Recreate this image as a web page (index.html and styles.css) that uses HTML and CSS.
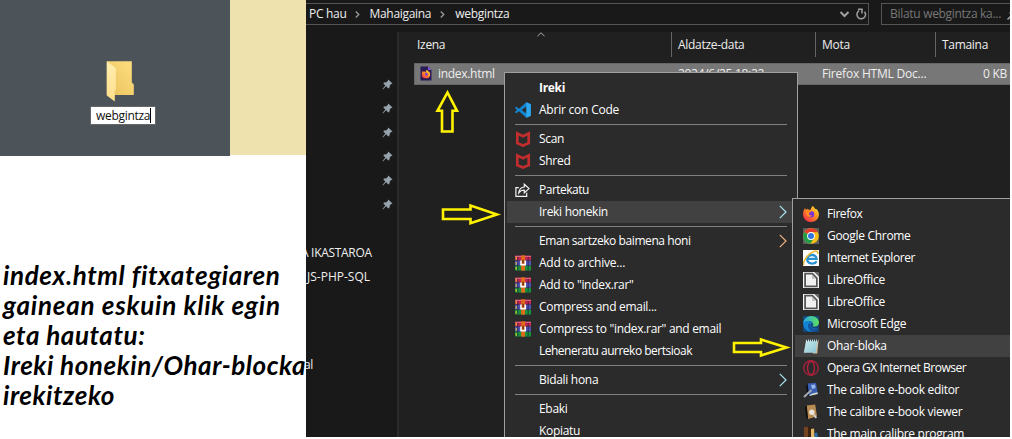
FILE: index.html
```html
<!DOCTYPE html>
<html lang="eu">
<head>
<meta charset="utf-8">
<title>webgintza</title>
<link rel="stylesheet" href="styles.css">
</head>
<body>
<svg class="defs" width="0" height="0" aria-hidden="true">
  <defs>
    <linearGradient id="fold" x1="0" y1="1" x2="1" y2="0"><stop offset="0" stop-color="#e9c15c"/><stop offset="1" stop-color="#ffdf80"/></linearGradient>
    <linearGradient id="flap" x1="0" y1="0" x2="0" y2="1"><stop offset="0" stop-color="#ffedb0"/><stop offset="1" stop-color="#ffdf8a"/></linearGradient>
    <linearGradient id="fox" x1="1" y1="0" x2="0.2" y2="1"><stop offset="0" stop-color="#ffe83a"/><stop offset=".45" stop-color="#ff9a1f"/><stop offset="1" stop-color="#f5274e"/></linearGradient>
    <linearGradient id="edge" x1="0" y1="0" x2="1" y2="0"><stop offset="0" stop-color="#2aa8e8"/><stop offset="1" stop-color="#5fe05a"/></linearGradient>
    <linearGradient id="note" x1="0" y1="0" x2="1" y2="1"><stop offset="0" stop-color="#e6f7fa"/><stop offset="1" stop-color="#86c3d2"/></linearGradient>
    <symbol id="pin" viewBox="0 0 11 11"><path d="M6.3 0.4 10.5 4.6 9.2 5.1 7.7 6.6 7.4 9 6.4 9.6 4.1 7.3 0.8 10.4 0.4 10 3.4 6.6 1.3 4.5 2 3.5 4.4 3.2 5.9 1.7Z" fill="#96a3ac"/></symbol>
    <symbol id="code" viewBox="0 0 16 16"><path d="M11.4 0.2 15.8 2.2V13.8L11.4 15.8 4 9.2 1.3 11.2 0.1 10.4V9.8L2.2 8 0.1 6.2V5.4L1.3 4.8 4 6.8ZM11.5 4.5 6.6 8 11.5 11.6Z" fill="#1485cf" fill-rule="evenodd"/><path d="M11.4 0.2 15.8 2.2V13.8L11.4 15.8Z" fill="#2fa8f2"/></symbol>
    <symbol id="shield" viewBox="0 0 16 16"><path d="M2.3 2.4 8 5.2 13.7 2.4V12.2L8 14.6 2.3 12.2Z" fill="none" stroke="#c22d2d" stroke-width="2.7"/></symbol>
    <symbol id="share" viewBox="0 0 16 16"><path d="M3.8 5.7H.9V14.3H11.7V10.8M9.3 2.2 14 6.6 9.3 10.8V8.2C6.8 8 5.2 8.9 3.8 10.8 4.2 7.3 6 5.2 9.3 5Z" fill="none" stroke="#f4f4f4" stroke-width="1.2"/></symbol>
    <symbol id="rar" viewBox="0 0 16 16"><path d="M0 .8H16V5.4H0Z" fill="#c3244f"/><path d="M0 5.7H16V10.5H0Z" fill="#4f53b5"/><path d="M0 10.8H16V15.5H0Z" fill="#19933b"/><path d="M0 .8H16V1.8H0Z" fill="#ec6f83"/><path d="M6.2.3H10V15.7H6.2Z" fill="#e06b1b"/><path d="M5.2 5.5H6.7V8.7H9.5V5.5H11V10.4H5.2Z" fill="#fff"/><path d="M7.5 4.7H8.7V8.6H7.5Z" fill="#5b2413"/><path d="M1.2 2V4.8M1.2 7V9.8M1.2 12V14.8" stroke="#efd32d" stroke-width="1"/><path d="M2.8 2V15M13.2 2V15" stroke="#1c1d49" stroke-width=".7"/></symbol>
    <symbol id="firefox" viewBox="0 0 16 16"><path d="M9.4 0C11 1 11.8 2.2 12.3 3.1L13.5 3C15.4 5 16 6.8 15.9 8.8 15.6 13 12.3 16 8.1 16 3.6 16 .2 12.8.1 8.4 0 6 .8 3.8 2.1 2.1L2.8 4.1 4.7 2.8 6.3 4.3C8.1 4 8.3 1.5 9.4 0Z" fill="url(#fox)"/><circle cx="8" cy="8.3" r="3.2" fill="#7a35d8"/><path d="M2.7 4.2C4 3.3 5.5 3.5 6.4 4.3L8.3 5.6C7.7 6.6 6.3 6.5 5.9 7.6 5.8 9.1 7.5 10 9.4 9.1 7.6 12 3.8 11 3.3 8Z" fill="#ff8a1d"/></symbol>
    <symbol id="chrome" viewBox="0 0 16 16"><path d="M0 0H16V16H0Z" fill="#5c5c5c"/><circle cx="8" cy="8" r="7.8" fill="#f9bf16"/><path d="M8 8 1.2 4.1A7.8 7.8 0 0 1 14.8 4.2H8Z" fill="#e33b2e"/><path d="M8 8 1.2 4.1A7.8 7.8 0 0 0 7.4 15.8L11 9.9Z" fill="#249b4b"/><circle cx="8" cy="8" r="3.9" fill="#fff"/><circle cx="8" cy="8" r="3" fill="#3274e0"/></symbol>
    <symbol id="ie" viewBox="0 0 16 16"><path d="M0 0H16V16H0Z" fill="#fff"/><path d="M13.6 11.3C11.5 14.8 4.2 14.2 4.2 9 4.2 4 13.4 3.4 13.6 8.9H5" fill="none" stroke="#2792d1" stroke-width="2.3"/><path d="M1 15C-1 12.8 4.2 4 10.8 1.5 14 .4 15.4 1.5 14.5 4" fill="none" stroke="#e9ba32" stroke-width="1.5"/></symbol>
    <symbol id="libre" viewBox="0 0 16 16"><path d="M0 0H16V16H0Z" fill="#f5f5f5"/><path d="M1.2.8H9.8L14.7 5.7V15.2H1.2Z" fill="#555"/><path d="M3 2.6H9L13 6.6V13.5H3Z" fill="#f1f1f1"/><path d="M9 2.5V6.7H13Z" fill="#bcbcbc"/><path d="M11.2 0H16V4.8Z" fill="#666"/></symbol>
    <symbol id="msedge" viewBox="0 0 16 16"><path d="M0 0H16V16H0Z" fill="#154a78"/><path d="M.2 7.3C.6 3 4 0 8.2 0 12.6 0 16 3.2 16 6.6 16 10 12.6 11.4 9.7 10.2 11.5 7.6 8.4 4.6 5 5.2 2.9 5.5 1.2 6.2.2 7.3Z" fill="url(#edge)"/><path d="M.2 7.2C2.8 4 7.8 4.6 8.8 7.2 6.5 7.4 6.4 13 14.3 12.5 10 18 .6 16.2.2 7.2Z" fill="#1284d6"/><path d="M6 7.2C4 9 5 14 9 15.8 12.2 15.5 13.5 14 14.6 12.2 9.7 13.7 6.5 11 7.3 7.4Z" fill="#16549f"/></symbol>
    <symbol id="notepad" viewBox="0 0 16 16"><path d="M4 1.8H15.6L14.2 15.6H10Z" fill="#d6c09a"/><path d="M3.2 1.7H14.5L12.8 14.7H.8Z" fill="url(#note)"/><path d="M4.5 .8V3.4M6.5 .8V3.4M8.5 .8V3.4M10.5 .8V3.4M12.5 .8V3.4M14.5 .8V3.4" stroke="#34464c" stroke-width="1"/><path d="M3 5H14M2.5 7H13.7M2.2 9H13.4M1.8 11H13M1.5 13H12.8" stroke="#8fc4d0" stroke-width=".5"/></symbol>
    <symbol id="opera" viewBox="0 0 16 16"><circle cx="8" cy="8" r="7.3" fill="none" stroke="#b5203f" stroke-width="1.2"/><ellipse cx="8" cy="8" rx="3.5" ry="6.6" fill="none" stroke="#b5203f" stroke-width="1.4"/></symbol>
    <symbol id="editor" viewBox="0 0 16 16"><path d="M4.5 1.5 13 .8 14.8 12 6 14Z" fill="#3a5eb2"/><path d="M8 3 12 2.5 12.6 6 9 7Z" fill="#98b6ed"/><path d="M4.5 1.5 3 3.5 4 13 6 14Z" fill="#0d1016"/><path d="M8 12 14.5 10.2 14.8 12 6 14Z" fill="#dbdcc8"/><path d="M1 15 8.5 8" stroke="#a5a9b0" stroke-width="2"/></symbol>
    <symbol id="viewer" viewBox="0 0 16 16"><path d="M3.7 1.5 12.2.6 14 12.5 5 15Z" fill="#b88b50"/><path d="M3.7 1.5 2 3 3 14 5 15Z" fill="#0f0e0c"/><circle cx="8.8" cy="8.3" r="2.7" fill="#e9e5dc"/><path d="M10.5 10.3 13.3 14" stroke="#d7d7d7" stroke-width="1.6"/></symbol>
    <symbol id="calibre" viewBox="0 0 16 16"><path d="M1 1H5V16H1Z" fill="#77431f"/><path d="M5 1H8V16H5Z" fill="#3a220f"/><path d="M8 3 11 2.5 12 16H8Z" fill="#e2b765"/><path d="M11.5 7 14 6.5 16 16H12Z" fill="#2c6db2"/></symbol>
    <symbol id="next" viewBox="0 0 8 14"><path d="M.8.8 7 7 .8 13.2" fill="none" stroke="currentColor" stroke-width="1.2"/></symbol>
    <symbol id="crumb" viewBox="0 0 5 7"><path d="M.8.5 3.8 3.5.8 6.5" fill="none" stroke="#9a9a9a" stroke-width="1.3"/></symbol>
  </defs>
</svg>

<div class="page">
  <section class="notes">
    <div class="desk">
      <div class="wallpaper">
        <svg class="folder" viewBox="0 0 28 41"><path d="M.8.2H25.8V21.5L27.8 23.5V34H.8Z" fill="url(#fold)"/><path d="M.8.2 9.8 7V28.5L8.8 30V40.5L.8 34.5Z" fill="url(#flap)"/></svg>
        <div class="rename"><span>webgintza</span></div>
      </div>
      <div class="sand"></div>
    </div>
    <div class="lesson">
      <p class="l1">index.html fitxategiaren</p>
      <p class="l2">gainean eskuin klik egin</p>
      <p class="l3">eta hautatu:</p>
      <p class="l4">Ireki honekin/Ohar-blocka</p>
      <p class="l5">irekitzeko</p>
    </div>
  </section>

  <section class="explorer">
    <div class="topbar">
      <div class="address">
        <span>PC hau</span><svg class="crumb"><use href="#crumb"/></svg>
        <span>Mahaigaina</span><svg class="crumb"><use href="#crumb"/></svg>
        <span class="here">webgintza</span>
        <svg class="tools" viewBox="0 0 29 14"><path d="M1.5 5 5.5 9 9.5 5" fill="none" stroke="#a0a0a0" stroke-width="2"/><path d="M20.2 3.7A4.3 4.3 0 1 0 25.5 4.7M19 2.2H23V6.4" fill="none" stroke="#a0a0a0" stroke-width="1.5"/></svg>
      </div>
      <div class="search"><span>Bilatu webgintza ka...</span><svg class="lens" viewBox="0 0 12 12"><path d="M.5 11.5 4 8" stroke="#aaa" stroke-width="1.5"/><circle cx="7" cy="5" r="4" fill="none" stroke="#aaa"/></svg></div>
    </div>
    <div class="main">
      <nav class="side">
        <div class="pins">
          <svg><use href="#pin"/></svg><svg><use href="#pin"/></svg><svg><use href="#pin"/></svg><svg><use href="#pin"/></svg><svg><use href="#pin"/></svg><svg><use href="#pin"/></svg>
        </div>
        <div class="tree"><span class="t1">A IKASTAROA</span><span class="t2">JS-PHP-SQL</span><span class="t3">al</span></div>
      </nav>
      <div class="files">
        <div class="heads">
          <span class="name">Izena<svg class="sort" viewBox="0 0 8 5"><path d="M.5 4.2 4 .8 7.5 4.2" fill="none" stroke="#aaa"/></svg></span>
          <span class="date">Aldatze-data</span><span class="kind">Mota</span><span class="size">Tamaina</span>
        </div>
        <div class="row">
          <span class="name"><svg class="doc" viewBox="0 0 12 15"><path d="M.5.5H8L11.5 4V14.5H.5Z" fill="#2a1a55"/><path d="M8 .5 11.5 4H8Z" fill="#8655d9"/><g transform="translate(1.5 3.8) scale(.55)"><use href="#firefox" width="16" height="16"/></g></svg><b>index.html</b></span>
          <span class="date">2024/6/25 18:22</span><span class="kind">Firefox HTML Doc...</span><span class="size">0 KB</span>
        </div>
      </div>
    </div>

    <div class="menu context">
      <div class="item strong"><i></i><span>Ireki</span></div>
      <div class="item"><svg><use href="#code"/></svg><span class="wide">Abrir con Code</span></div>
      <hr>
      <div class="item"><svg><use href="#shield"/></svg><span>Scan</span></div>
      <div class="item"><svg><use href="#shield"/></svg><span>Shred</span></div>
      <hr>
      <div class="item"><svg><use href="#share"/></svg><span class="tight">Partekatu</span></div>
      <div class="item on"><i></i><span>Ireki honekin</span><svg class="next"><use href="#next"/></svg></div>
      <hr>
      <div class="item"><i></i><span class="snug">Eman sartzeko baimena honi</span><svg class="next warm"><use href="#next"/></svg></div>
      <div class="item"><svg><use href="#rar"/></svg><span class="wide">Add to archive...</span></div>
      <div class="item"><svg><use href="#rar"/></svg><span>Add to "index.rar"</span></div>
      <div class="item"><svg><use href="#rar"/></svg><span>Compress and email...</span></div>
      <div class="item"><svg><use href="#rar"/></svg><span>Compress to "index.rar" and email</span></div>
      <div class="item"><i></i><span class="tight">Leheneratu aurreko bertsioak</span></div>
      <hr>
      <div class="item"><i></i><span>Bidali hona</span><svg class="next"><use href="#next"/></svg></div>
      <hr>
      <div class="item"><i></i><span>Ebaki</span></div>
      <div class="item"><i></i><span>Kopiatu</span></div>
    </div>

    <div class="menu openwith">
      <div class="item"><svg><use href="#firefox"/></svg><span class="snug">Firefox</span></div>
      <div class="item"><svg><use href="#chrome"/></svg><span>Google Chrome</span></div>
      <div class="item"><svg><use href="#ie"/></svg><span class="snug">Internet Explorer</span></div>
      <div class="item"><svg><use href="#libre"/></svg><span>LibreOffice</span></div>
      <div class="item"><svg><use href="#libre"/></svg><span>LibreOffice</span></div>
      <div class="item"><svg><use href="#msedge"/></svg><span>Microsoft Edge</span></div>
      <div class="item on"><svg><use href="#notepad"/></svg><span>Ohar-bloka</span></div>
      <div class="item"><svg><use href="#opera"/></svg><span class="tight">Opera GX Internet Browser</span></div>
      <div class="item"><svg><use href="#editor"/></svg><span>The calibre e-book editor</span></div>
      <div class="item"><svg><use href="#viewer"/></svg><span>The calibre e-book viewer</span></div>
      <div class="item"><svg><use href="#calibre"/></svg><span>The main calibre program</span></div>
    </div>

    <svg class="arrows" viewBox="306 0 704 437"><g fill="none" stroke="#fff200" stroke-width="2.6"><path d="M447.5 92.5 457 110.8H452.5V131.5H442V110.8H437.5Z"/><path d="M443 209.5H470.5V205.5L497 214.5 470.5 223.2V219H443Z"/><path d="M734 343H761V339.5L786.5 347.5 761 355.5V352H734Z"/></g></svg>
  </section>
</div>
</body>
</html>
```
FILE: styles.css
```css
* { box-sizing: border-box; }
body { margin: 0; background: #fff; font: 12px/22px "Open Sans", "Noto Sans", sans-serif; letter-spacing: -0.3px; }
svg { display: block; flex: none; }
.defs { position: absolute; }
.page { display: flex; width: 1010px; height: 437px; overflow: hidden; }

.notes { width: 306px; flex: none; background: #fff; }
.desk { display: flex; align-items: flex-start; height: 156px; }
.wallpaper { width: 230px; height: 156px; background: #4c545a; display: flex; flex-direction: column; align-items: flex-start; padding: 61px 0 0 90px; }
.folder { width: 28px; height: 41px; margin-left: 16px; }
.rename { width: 66px; height: 19px; margin-top: 4px; border: 1px solid #666; background: #fff; color: #111; padding-left: 5px; line-height: 18px; }
.rename span { display: inline-block; height: 15px; line-height: 15px; border-right: 1px solid #000; letter-spacing: -.3px; white-space: nowrap; }
.sand { width: 76px; height: 155px; background: #eee2ae; }
.lesson { padding: 104px 0 0 3px; color: #000; font: italic bold 26px/30px Lato, sans-serif; letter-spacing: .55px; white-space: nowrap; }
.lesson p { margin: 0; }
.lesson .l1 { letter-spacing: .62px; }
.lesson .l2 { letter-spacing: .76px; }

.explorer { position: relative; width: 704px; height: 437px; background: #191919; color: #eee; white-space: nowrap; overflow: hidden; display: flex; flex-direction: column; }
.topbar { display: flex; gap: 12px; height: 32px; padding-top: 3px; }
.address { display: flex; flex: none; align-items: center; width: 563px; height: 22px; border: 1px solid #555; border-left: 0; padding-left: 3px; }
.crumb { width: 5px; height: 7px; margin: 0 9px; }
.here { margin-left: 1px; }
.tools { width: 29px; height: 14px; margin-left: auto; }
.search { display: flex; flex: none; gap: 6px; width: 160px; height: 22px; border: 1px solid #555; padding-left: 8px; line-height: 20px; color: #777; }
.lens { width: 12px; height: 12px; margin-top: 4px; }
.main { display: flex; flex: 1; }
.side { display: flex; width: 93px; border-right: 2px solid #2b2b2b; flex-direction: column; }
.pins { display: flex; flex-direction: column; gap: 13px; padding: 47px 0 0 76px; height: 209px; }
.pins svg { width: 11px; height: 11px; }
.tree { display: flex; flex-direction: column; line-height: 24px; }
.t1 { margin-left: -5px; }
.t2 { letter-spacing: 0; margin-left: 1px; }
.t3 { margin: 64px 0 0 -2px; }
.files { flex: 1; background: #202020; padding-left: 15px; }
.heads { display: flex; height: 31px; line-height: 26px; }
.heads span { height: 25px; }
.heads .date, .heads .kind, .heads .size { border-left: 1px solid #636363; }
.heads .name { display: flex; gap: 92px; padding-left: 3px; }
.heads .sort { width: 8px; height: 5px; }
.name { width: 257px; }
.date { width: 144px; padding-left: 6px; }
.kind { width: 120px; padding-left: 6px; }
.size { padding-left: 6px; width: 74px; }
.row { display: flex; height: 22px; border: 1px solid #666; border-width: 1px 0 1px 1px; background: #777; line-height: 20px; }
.row .name { display: flex; width: 256px; gap: 6px; padding-left: 5px; }
.row b { font-weight: 400; }
.row .date { padding-left: 7px; }
.row .kind { padding-left: 7px; letter-spacing: -.2px; }
.row .size { text-align: right; padding: 0 2px 0 0; }
.doc { width: 12px; height: 15px; margin-top: 2px; }

.menu { position: absolute; border: 1px solid #a0a0a0; background: #2b2b2b; padding: 4px 2px; color: #fff; }
.context { left: 198px; top: 72px; width: 294px; height: 380px; }
.openwith { left: 486px; top: 198px; width: 230px; height: 260px; }
.menu hr { height: 1px; margin: 3px 8px; border: 0; background: #808080; }
.item { display: flex; align-items: center; height: 22px; padding-left: 8px; gap: 8px; }
.item > svg, .item > i { width: 16px; height: 16px; flex: none; }
.item.on { background: #414141; }
.strong { font-weight: 700; }
.wide { letter-spacing: -.22px; }
.snug { letter-spacing: -.42px; }
.tight { letter-spacing: -.5px; }
.item > .next { width: 8px; height: 14px; margin: 0 8px 0 auto; color: #a9e4ee; }
.item > .warm { color: #f0b080; }
.arrows { position: absolute; left: 0; top: 0; width: 704px; height: 437px; pointer-events: none; }
```
